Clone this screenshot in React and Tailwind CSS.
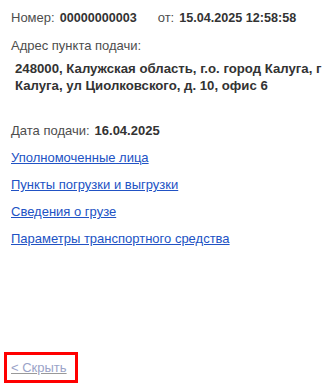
export default function App() {
    return (
        <div className="w-[332px] h-[389px] bg-white flex flex-col font-['Liberation_Sans',Arial,sans-serif] text-[13px] leading-[15px] text-[#4d4d4d]">
            <div className="flex flex-row items-baseline pl-[11px] pt-[10px]">
                <span>Номер:</span>
                <span className="ml-[5px] font-bold text-[#333] text-[12.6px]">00000000003</span>
                <span className="ml-[21px]">от:</span>
                <span className="ml-[5px] font-bold text-[#333] text-[12.6px]">15.04.2025 12:58:58</span>
            </div>

            <div className="pl-[11px] mt-[12px]">Адрес пункта подачи:</div>

            <div className="pl-[15px] mt-[7px] font-bold text-[#333] text-[13.2px] leading-[17px] whitespace-nowrap">
                248000, Калужская область, г.о. город Калуга, г
                <br />
                Калуга, ул Циолковского, д. 10, офис 6
            </div>

            <div className="pl-[11px] mt-[29px] flex flex-row items-baseline">
                <span>Дата подачи:</span>
                <span className="ml-[5px] font-bold text-[#333]">16.04.2025</span>
            </div>

            <div className="pl-[11px] mt-[12px] flex flex-col gap-[12px] text-[#2152c4]">
                <a href="#" className="underline self-start">Уполномоченные лица</a>
                <a href="#" className="underline self-start">Пункты погрузки и выгрузки</a>
                <a href="#" className="underline self-start">Сведения о грузе</a>
                <a href="#" className="underline self-start">Параметры транспортного средства</a>
            </div>

            <div className="mt-auto mb-[6px] ml-[4px] self-start border-[3px] border-[#ff0000] pl-[4px] py-[5px] w-[74px]">
                <a href="#" className="underline text-[#9aa3c8] decoration-[#999]">&lt; Скрыть</a>
            </div>
        </div>
    );
}
